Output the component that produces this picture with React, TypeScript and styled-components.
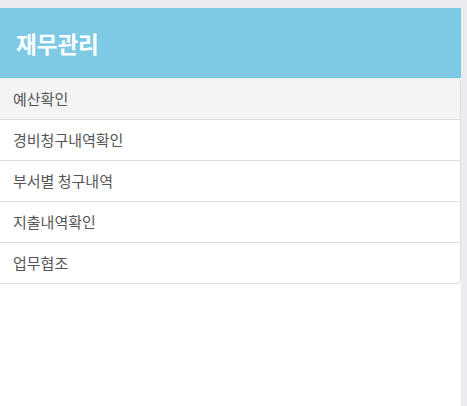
import React from "react";
import styled, { createGlobalStyle } from "styled-components";

const Global = createGlobalStyle`
  html, body { margin: 0; padding: 0; }
  body {
    background: #ebecf0;
    font-family: "Noto Sans CJK KR", "Noto Sans", sans-serif;
  }
`;

const Page = styled.div`
  padding-top: 8px;
  min-height: 406px;
  box-sizing: border-box;
`;

const Panel = styled.div`
  width: 461px;
  min-height: 398px;
  background: #ffffff;
`;

const Header = styled.header`
  height: 70px;
  background: #7ecae5;
  display: flex;
  align-items: center;
  padding-left: 16px;
  box-sizing: border-box;
`;

const Title = styled.h1`
  margin: 0;
  color: #ffffff;
  font-size: 22.5px;
  font-weight: 700;
  line-height: 1;
`;

const List = styled.ul`
  list-style: none;
  margin: 0 0 0 -1px;
  padding: 0;
  width: 462px;
`;

const Item = styled.li<{ $active?: boolean }>`
  padding: 10px 13px 10px 13px;
  height: 20px;
  line-height: 20px;
  font-size: 15px;
  color: #555555;
  background: ${(p) => (p.$active ? "#f4f4f4" : "#ffffff")};
  border: 1px solid #dddddd;
  margin-bottom: -1px;
  &:first-child { border-top-right-radius: 4px; border-top-color: #e8e8e8; }
  &:last-child { border-bottom-right-radius: 4px; margin-bottom: 0; }
`;

const items = ["예산확인", "경비청구내역확인", "부서별 청구내역", "지출내역확인", "업무협조"];

export default function App() {
  return (
    <>
      <Global />
      <Page>
        <Panel>
          <Header>
            <Title>재무관리</Title>
          </Header>
          <List>
            {items.map((t, i) => (
              <Item key={t} $active={i === 0}>
                {t}
              </Item>
            ))}
          </List>
        </Panel>
      </Page>
    </>
  );
}
